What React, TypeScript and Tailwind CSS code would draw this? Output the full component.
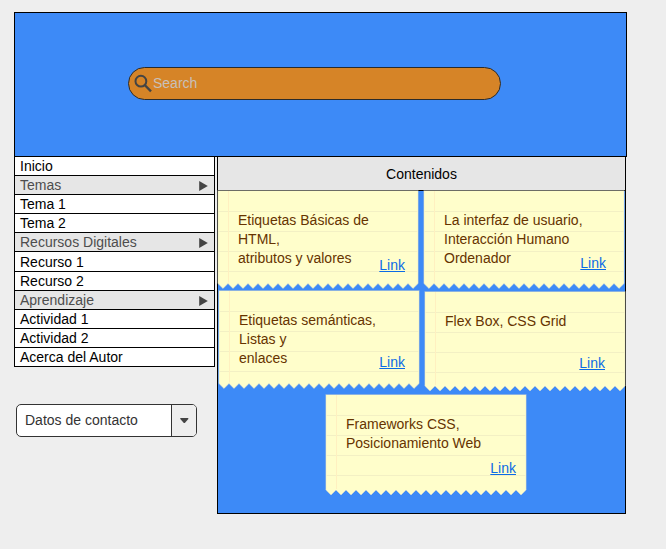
import React from "react";

type MenuEntry = { label: string; group?: boolean; tall?: boolean };

const menu: MenuEntry[] = [
  { label: "Inicio" },
  { label: "Temas", group: true },
  { label: "Tema 1" },
  { label: "Tema 2" },
  { label: "Recursos Digitales", group: true },
  { label: "Recurso 1", tall: true },
  { label: "Recurso 2" },
  { label: "Aprendizaje", group: true },
  { label: "Actividad 1" },
  { label: "Actividad 2" },
  { label: "Acerca del Autor" },
];

// Sheet outline: straight top and sides, serrated bottom edge.
function outline(top: number, left: number, right: number, height: number) {
  const valley = height - 5;
  let edge = "";
  for (let i = 19; i >= 0; i--) {
    const x = i === 0 ? left : i * 10 + 1;
    edge += ` L${i * 10 + 6} ${height} L${x} ${valley}`;
  }
  return `M${left} ${top} H${right} V${valley}${edge} Z`;
}

function Paper({ height }: { height: number }) {
  return (
    <svg
      className="absolute inset-0 overflow-visible"
      width="202"
      height={height}
      viewBox={`0 0 202 ${height}`}
    >
      <path d={outline(1, 1, 201, height)} fill="#fffecb" />
      <path
        d={outline(0.5, 0.8, 201.2, height)}
        fill="none"
        stroke="#dadaca"
        strokeOpacity="0.5"
      />
      {[21.5, 41.5, 61.5, 81.5].map((y) => (
        <path key={y} d={`M1.5 ${y} H200.5`} stroke="#f3f0c4" />
      ))}
      <path d={`M11.5 1 V${height - 6}`} stroke="#fff0c0" />
    </svg>
  );
}

type NoteProps = {
  lines: string[];
  height: number;
  className: string;
  textClass: string;
  linkClass: string;
};

function Note({ lines, height, className, textClass, linkClass }: NoteProps) {
  return (
    <article className={`relative w-[201px] shrink-0 ${className}`}>
      <Paper height={height} />
      <div className="relative flex flex-col pt-[21px]">
        <p className={`whitespace-nowrap pl-[21px] text-[#663300] ${textClass}`}>
          {lines.map((line) => (
            <span key={line} className="block">
              {line}
            </span>
          ))}
        </p>
        <a href="#" className={`self-end text-[#0b6be6] underline ${linkClass}`}>
          Link
        </a>
      </div>
    </article>
  );
}

export default function App() {
  return (
    <div className="h-[549px] w-[666px] overflow-hidden bg-[#eeeeee] pl-[14px] pt-3 font-['Liberation_Sans',Arial,sans-serif] text-[14px] leading-[19px] text-black">
      <header className="flex h-[145px] w-[613px] items-start border border-black bg-[#3d8af7] pl-[113px] pt-[54px]">
        <div className="flex h-[33px] w-[373px] items-center rounded-full border border-[#2b2b2b] bg-[#d68427] pl-[5px]">
          <svg width="19" height="19" viewBox="0 0 19 19" fill="none" stroke="#444444">
            <circle cx="6.9" cy="7.2" r="5.4" strokeWidth="2" />
            <path d="M10.7 11 L17 17.3" strokeWidth="2.4" />
          </svg>
          <span className="text-[#c8c0ba]">Search</span>
        </div>
      </header>

      <div className="-mt-px flex items-start">
        <aside className="w-[201px]">
          <nav className="flex flex-col border border-b-0 border-black">
            {menu.map((m) => (
              <a
                key={m.label}
                href="#"
                className={`flex items-center justify-between border-b border-black pl-[5px] pr-1.5 ${
                  m.tall ? "h-5 pt-px" : "h-[19px]"
                } ${m.group ? "bg-[#e6e6e6] text-[#4d4d4d]" : "bg-white"}`}
              >
                {m.label}
                {m.group && (
                  <svg width="9" height="10" viewBox="0 0 9 10" className="mt-0.5">
                    <path d="M0.2 0 L8.8 5 L0.2 10 Z" fill="#444444" />
                  </svg>
                )}
              </a>
            ))}
          </nav>
          <button className="ml-0.5 mt-[37px] flex h-[33px] w-[181px] overflow-hidden rounded-[5px] border border-[#333333] bg-white text-[#333333]">
            <span className="flex h-full flex-1 items-center pl-2">Datos de contacto</span>
            <span className="flex h-full w-[25px] items-center justify-center border-l border-[#333333] bg-[#eeeeee]">
              <svg width="9" height="5" viewBox="0 0 9 5">
                <path d="M0.3 0 H8.3 V1 L4.8 5 H3.8 L0.3 1 Z" fill="#444444" />
              </svg>
            </span>
          </button>
        </aside>

        <main className="ml-0.5 h-[358px] w-[409px] border border-black bg-[#3d8af7]">
          <h1 className="flex h-[34px] items-center justify-center border-b border-black bg-[#e6e6e6] pt-0.5">
            Contenidos
          </h1>
          <section className="-ml-px -mt-px flex items-start gap-[5px]">
            <Note
              lines={["Etiquetas Básicas de", "HTML,", "atributos y valores"]}
              height={98.5}
              className="h-[100px]"
              textClass="h-[45px]"
              linkClass="mr-[13px]"
            />
            <Note
              lines={["La interfaz de usuario,", "Interacción Humano", "Ordenador"]}
              height={98.5}
              className="h-[100px]"
              textClass="h-[43px]"
              linkClass="mr-[18px]"
            />
          </section>
          <section className="-ml-px flex items-start gap-[5px] pl-px">
            <Note
              lines={["Etiquetas semánticas,", "Listas y", "enlaces"]}
              height={98.5}
              className="h-[100px]"
              textClass="h-[42px]"
              linkClass="mr-[14px]"
            />
            <Note
              lines={["Flex Box, CSS Grid"]}
              height={100}
              className="mt-px h-[99px]"
              textClass="h-[42px]"
              linkClass="mr-5"
            />
          </section>
          <section className="-ml-px flex pl-[108px] pt-1">
            <Note
              lines={["Frameworks CSS,", "Posicionamiento Web"]}
              height={101}
              className="h-[101px]"
              textClass="h-[44px]"
              linkClass="mr-2.5"
            />
          </section>
        </main>
      </div>
    </div>
  );
}
